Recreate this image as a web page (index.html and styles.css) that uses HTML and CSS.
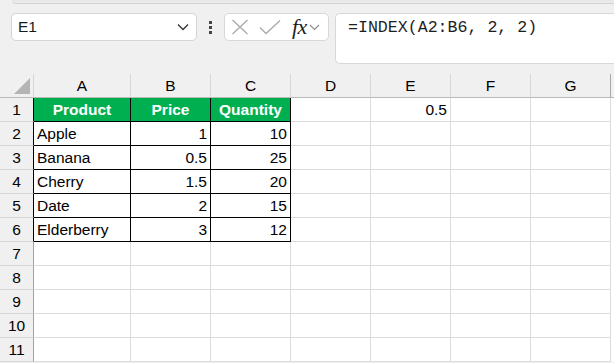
FILE: index.html
```html
<!DOCTYPE html>
<html lang="en">
<head>
    <meta charset="UTF-8">
    <meta name="viewport" content="width=device-width, initial-scale=1.0">
    <title>INDEX example</title>
    <link rel="stylesheet" href="styles.css">
</head>
<body>
    <div class="ribbon-edge"></div>

    <div class="formula-row">
        <div class="name-box">
            <span>E1</span>
            <svg class="chev" width="12" height="8" viewBox="0 0 12 8"><path d="M1 1.5 L6 6.5 L11 1.5" fill="none" stroke="#333" stroke-width="1.3"/></svg>
        </div>
        <div class="grip"><i></i><i></i><i></i></div>
        <div class="fx-box">
            <svg width="18" height="16" viewBox="0 0 18 16"><path d="M1.5 1 L16.5 15 M16.5 1 L1.5 15" stroke="#a9a9a9" stroke-width="1.3" fill="none"/></svg>
            <svg width="22" height="16" viewBox="0 0 22 16"><path d="M1 8.5 L7 14.5 L21 1.5" stroke="#a9a9a9" stroke-width="1.3" fill="none"/></svg>
            <span class="fx">fx</span>
            <svg class="chev-sm" width="11" height="7" viewBox="0 0 11 7"><path d="M1 1 L5.5 5.5 L10 1" fill="none" stroke="#8a8a8a" stroke-width="1.1"/></svg>
        </div>
        <div class="formula">=INDEX(A2:B6, 2, 2)</div>
    </div>

    <div class="sheet">
        <div class="row head">
            <div class="corner"><span class="tri"></span></div>
            <div>A</div><div>B</div><div>C</div><div>D</div><div>E</div><div>F</div><div class="last">G</div><div class="rest"></div>
        </div>
        <div class="row">
            <div class="rh in">1</div>
            <div class="c hd">Product</div><div class="c hd">Price</div><div class="c hd">Quantity</div>
            <div class="c"></div><div class="c num">0.5</div><div class="c"></div><div class="c"></div><div class="rest"></div>
        </div>
        <div class="row">
            <div class="rh in">2</div>
            <div class="c box">Apple</div><div class="c box num">1</div><div class="c box num">10</div>
            <div class="c"></div><div class="c"></div><div class="c"></div><div class="c"></div><div class="rest"></div>
        </div>
        <div class="row">
            <div class="rh in">3</div>
            <div class="c box">Banana</div><div class="c box num">0.5</div><div class="c box num">25</div>
            <div class="c"></div><div class="c"></div><div class="c"></div><div class="c"></div><div class="rest"></div>
        </div>
        <div class="row">
            <div class="rh in">4</div>
            <div class="c box">Cherry</div><div class="c box num">1.5</div><div class="c box num">20</div>
            <div class="c"></div><div class="c"></div><div class="c"></div><div class="c"></div><div class="rest"></div>
        </div>
        <div class="row">
            <div class="rh in">5</div>
            <div class="c box">Date</div><div class="c box num">2</div><div class="c box num">15</div>
            <div class="c"></div><div class="c"></div><div class="c"></div><div class="c"></div><div class="rest"></div>
        </div>
        <div class="row">
            <div class="rh in">6</div>
            <div class="c box">Elderberry</div><div class="c box num">3</div><div class="c box num">12</div>
            <div class="c"></div><div class="c"></div><div class="c"></div><div class="c"></div><div class="rest"></div>
        </div>
        <div class="row">
            <div class="rh">7</div>
            <div class="c"></div><div class="c"></div><div class="c"></div><div class="c"></div><div class="c"></div><div class="c"></div><div class="c"></div><div class="rest"></div>
        </div>
        <div class="row">
            <div class="rh">8</div>
            <div class="c"></div><div class="c"></div><div class="c"></div><div class="c"></div><div class="c"></div><div class="c"></div><div class="c"></div><div class="rest"></div>
        </div>
        <div class="row">
            <div class="rh">9</div>
            <div class="c"></div><div class="c"></div><div class="c"></div><div class="c"></div><div class="c"></div><div class="c"></div><div class="c"></div><div class="rest"></div>
        </div>
        <div class="row">
            <div class="rh">10</div>
            <div class="c"></div><div class="c"></div><div class="c"></div><div class="c"></div><div class="c"></div><div class="c"></div><div class="c"></div><div class="rest"></div>
        </div>
        <div class="row">
            <div class="rh">11</div>
            <div class="c"></div><div class="c"></div><div class="c"></div><div class="c"></div><div class="c"></div><div class="c"></div><div class="c"></div><div class="rest"></div>
        </div>
    </div>
</body>
</html>
```

FILE: styles.css
```css
body {
    margin: 0;
    background: #f0f0f0;
    font-family: "Liberation Sans", Arial, sans-serif;
    color: #000;
    overflow: hidden;
}
.ribbon-edge {
    height: 3px;
    margin-left: 12px;
    background: linear-gradient(#e6e6e6, #ececec);
    border-bottom: 1px solid #d2d2d2;
    border-bottom-left-radius: 6px;
}
.formula-row {
    height: 70px;
    box-sizing: border-box;
    padding: 9px 0 0 11px;
    display: flex;
    align-items: flex-start;
}
.name-box {
    width: 186px;
    height: 28px;
    box-sizing: border-box;
    background: #fff;
    border: 1px solid #d4d4d4;
    border-radius: 5px;
    display: flex;
    align-items: center;
    justify-content: space-between;
    padding: 0 7px 0 6px;
    font-size: 15.5px;
    line-height: 26px;
    color: #1a1a1a;
}
.grip {
    width: 27px;
    height: 28px;
    display: flex;
    flex-direction: column;
    align-items: center;
    justify-content: center;
    gap: 2px;
}
.grip i {
    width: 3px;
    height: 3px;
    background: #444;
}
.fx-box {
    width: 105px;
    height: 28px;
    box-sizing: border-box;
    background: #fff;
    border: 1px solid #d8d8d8;
    border-radius: 5px;
    display: flex;
    align-items: center;
    padding: 0 3px 0 6px;
    gap: 10px;
}
.fx {
    font-family: "Liberation Serif", "Times New Roman", serif;
    font-style: italic;
    font-size: 22px;
    color: #1e1e1e;
    margin-left: 1px;
    line-height: 1;
    letter-spacing: -0.5px;
}
.chev-sm {
    margin-left: -8px;
}
.formula {
    flex: 1;
    margin-left: 6px;
    height: 51px;
    box-sizing: border-box;
    background: #fff;
    border: 1px solid #d8d8d8;
    border-right: none;
    border-radius: 5px 0 0 5px;
    padding: 4px 12px;
    font-family: "Liberation Mono", "Courier New", monospace;
    font-size: 16.6px;
    line-height: 20px;
    color: #1e1e1e;
}
.sheet {
    background: #fff;
    font-size: 15.5px;
}
.row {
    display: grid;
    grid-template-columns: 34px 97px repeat(6, 80px) 1fr;
    height: 24px;
}
.row > div {
    box-sizing: border-box;
    height: 24px;
    line-height: 23px;
    white-space: nowrap;
    overflow: hidden;
}
.head > div {
    background: #f0f0f0;
    text-align: center;
    border-right: 1px solid #d6d6d6;
    border-bottom: 1px solid #b9b9b9;
}
.head > .last {
    border-right-color: #a8a8a8;
}
.head > .rest {
    border-right: none;
}
.corner {
    position: relative;
}
.tri {
    position: absolute;
    right: 3px;
    bottom: 3px;
    width: 0;
    height: 0;
    border-left: 16px solid transparent;
    border-bottom: 16px solid #b4b4b4;
}
.rh {
    background: #f0f0f0;
    text-align: center;
    border-right: 1px solid #a2a2a2;
    border-bottom: 1px solid #d6d6d6;
}
.rh.in {
    border-right-color: #000;
}
.c {
    padding: 0 3px;
    border-right: 1px solid #dcdcdc;
    border-bottom: 1px solid #dcdcdc;
}
.c.num {
    text-align: right;
}
.c.box {
    border-right-color: #000;
    border-bottom-color: #000;
}
.c.hd {
    background: #00b050;
    color: #fff;
    font-weight: bold;
    text-align: center;
    border-right-color: #000;
    border-bottom-color: #000;
}
.rest {
    background: #fff;
}
```
